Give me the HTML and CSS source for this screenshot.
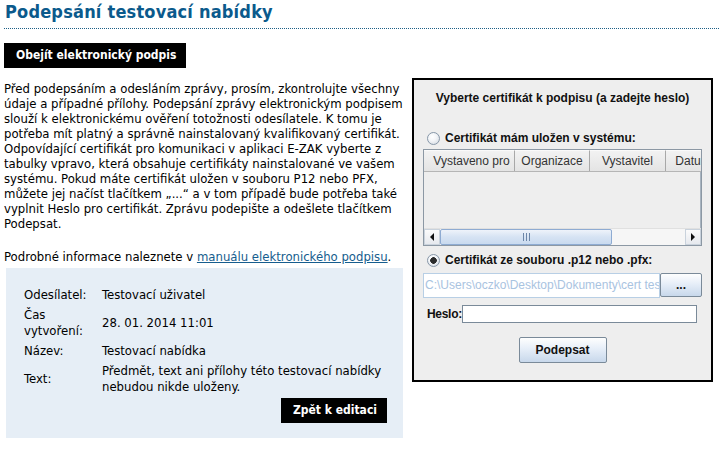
FILE: index.html
```html
<!DOCTYPE html>
<html lang="cs">
<head>
<meta charset="utf-8">
<title>Podepsání testovací nabídky</title>
<link rel="stylesheet" href="styles.css">
</head>
<body>
<h1 class="page-title">Podepsání testovací nabídky</h1>
<div class="actions"><button class="btn-black" type="button">Obejít elektronický podpis</button></div>
<div class="content">
  <div class="left">
    <p class="intro">Před podepsáním a odesláním zprávy, prosím, zkontrolujte všechny údaje a případné přílohy. Podepsání zprávy elektronickým podpisem slouží k elektronickému ověření totožnosti odesílatele. K tomu je potřeba mít platný a správně nainstalovaný kvalifikovaný certifikát. Odpovídající certifikát pro komunikaci v aplikaci E-ZAK vyberte z tabulky vpravo, která obsahuje certifikáty nainstalované ve vašem systému. Pokud máte certifikát uložen v souboru P12 nebo PFX, můžete jej načíst tlačítkem „...“ a v tom případě bude potřeba také vyplnit Heslo pro certifikát. Zprávu podepište a odešlete tlačítkem Podepsat.</p>
    <p class="more">Podrobné informace naleznete v <a href="#">manuálu elektronického podpisu</a>.</p>
    <div class="summary">
      <table class="info">
        <tr><th>Odesílatel:</th><td>Testovací uživatel</td></tr>
        <tr><th>Čas vytvoření:</th><td>28. 01. 2014 11:01</td></tr>
        <tr><th>Název:</th><td>Testovací nabídka</td></tr>
        <tr><th>Text:</th><td>Předmět, text ani přílohy této testovací nabídky nebudou nikde uloženy.</td></tr>
      </table>
      <div class="summary-actions"><button class="btn-black" type="button">Zpět k editaci</button></div>
    </div>
  </div>
  <div class="applet">
    <div class="applet-title">Vyberte certifikát k podpisu (a zadejte heslo)</div>
    <div class="choice"><span class="radio"></span>Certifikát mám uložen v systému:</div>
    <div class="cert-table">
      <div class="cert-head">
        <div class="col c1">Vystaveno pro</div>
        <div class="col c2">Organizace</div>
        <div class="col c3">Vystavitel</div>
        <div class="col c4">Datum</div>
      </div>
      <div class="cert-body"></div>
      <div class="hscroll">
        <span class="sb-btn sb-left"></span>
        <span class="sb-thumb"><span class="grip"></span></span>
        <span class="sb-track"></span>
        <span class="sb-btn sb-right"></span>
      </div>
    </div>
    <div class="choice choice-file"><span class="radio on"></span>Certifikát ze souboru .p12 nebo .pfx:</div>
    <div class="file-row">
      <div class="file-field">C:\Users\oczko\Desktop\Dokumenty\cert test.p12</div>
      <button class="jbtn browse" type="button">...</button>
    </div>
    <div class="pass-row">
      <span class="pass-label">Heslo:</span>
      <input class="pass-input" type="password">
    </div>
    <button class="jbtn sign" type="button">Podepsat</button>
  </div>
</div>
</body>
</html>
```

FILE: styles.css
```css
html, body {
  background: #ffffff;
}
body {
  margin: 0;
  padding: 0 4px;
  font-family: "DejaVu Sans Condensed", "DejaVu Sans", sans-serif;
  font-size: 13px;
  color: #000;
}

.page-title {
  margin: 0;
  padding: 1px 0 5px 1px;
  font-size: 18px;
  line-height: 22px;
  letter-spacing: 0.2px;
  font-weight: bold;
  color: #0b5a8c;
  border-bottom: 1px dotted #1d5f86;
}

.actions {
  margin-top: 14px;
}

.btn-black {
  display: inline-block;
  margin: 0;
  border: 0;
  background: #000;
  color: #fff;
  font-family: "DejaVu Sans Condensed", "DejaVu Sans", sans-serif;
  font-weight: bold;
  font-size: 12px;
  line-height: 15px;
  padding: 5px 10px 5px 12px;
  cursor: pointer;
}

.content {
  display: flex;
  align-items: flex-start;
  margin-top: 10px;
}

.left {
  width: 400px;
  flex: none;
}

.intro {
  margin: 3px 0 0;
  line-height: 15px;
}

.more {
  margin: 18px 0 0;
  line-height: 15px;
}
.more a {
  color: #165d8e;
  text-decoration: underline;
}

.summary {
  margin: 4px 1px 0 2px;
  background: #e6eef6;
  padding: 17px 16px 15px;
}

.info {
  border-collapse: collapse;
  width: 100%;
}
.info th,
.info td {
  padding: 2px;
  line-height: 16px;
  text-align: left;
  vertical-align: middle;
  font-weight: normal;
}
.info th {
  width: 74px;
}

.summary-actions {
  margin-top: 1px;
  text-align: right;
}

/* Java applet */
.applet {
  flex: none;
  margin-left: 8px;
  width: 297px;
  height: 300px;
  border: 2px solid #000;
  background: #eeeeee;
  font-family: "Liberation Sans", Arial, sans-serif;
  font-size: 12px;
  color: #111;
  display: flex;
  flex-direction: column;
}

.applet-title {
  margin-top: 10px;
  line-height: 16px;
  text-align: center;
  font-weight: bold;
}

.choice {
  display: flex;
  align-items: center;
  gap: 5px;
  margin: 24px 0 0 13px;
  height: 16px;
  font-weight: bold;
}
.choice-file {
  margin-top: 6px;
}

.radio {
  width: 11px;
  height: 11px;
  border-radius: 50%;
  border: 1px solid #8797a8;
  background: radial-gradient(circle at 40% 35%, #ffffff 0, #f3f5f8 40%, #cfd6de 100%);
  flex: none;
}
.radio.on {
  background:
    radial-gradient(circle at 50% 50%, #2b2b2b 0, #2b2b2b 3px, transparent 3.6px),
    radial-gradient(circle at 40% 35%, #ffffff 0, #f3f5f8 40%, #cfd6de 100%);
}

.cert-table {
  margin: 3px 9px 0;
  height: 97px;
  box-sizing: border-box;
  border: 1px solid #8c98a4;
  display: flex;
  flex-direction: column;
  overflow: hidden;
}

.cert-head {
  display: flex;
  height: 21px;
  flex: none;
  overflow: hidden;
  border-bottom: 1px solid #b5b5b5;
}
.col {
  flex: none;
  box-sizing: border-box;
  height: 21px;
  line-height: 20px;
  text-align: center;
  color: #333;
  background: linear-gradient(#f2f2f2, #e4e4e4);
  border-right: 1px solid #a8a8a8;
  border-top: 1px solid #fafafa;
  white-space: nowrap;
}
.c1 { width: 91px; padding-left: 5px; }
.c2 { width: 75px; }
.c3 { width: 76px; }
.c4 { width: 54px; border-right: 0; }

.cert-body {
  flex: 1;
  background: #eeeeee;
  border-right: 1px solid #a8b4c0;
}

.hscroll {
  flex: none;
  height: 17px;
  display: flex;
  background: #f4f4f4;
  border-top: 1px solid #e0e0e0;
  box-sizing: border-box;
}
.sb-btn {
  flex: none;
  width: 16px;
  box-sizing: border-box;
  border: 1px solid #c9d2dc;
  background: linear-gradient(#fbfbfb, #e6e9ee);
  display: flex;
  align-items: center;
  justify-content: center;
}
.sb-left::before {
  content: "";
  border-right: 4px solid #111;
  border-top: 4px solid transparent;
  border-bottom: 4px solid transparent;
}
.sb-right::before {
  content: "";
  border-left: 4px solid #111;
  border-top: 4px solid transparent;
  border-bottom: 4px solid transparent;
}
.sb-thumb {
  flex: none;
  width: 172px;
  box-sizing: border-box;
  border: 1px solid #8eabd2;
  border-radius: 2px;
  background: linear-gradient(#eef3fa, #d6e3f3 50%, #c9daef);
  display: flex;
  align-items: center;
  justify-content: center;
}
.grip {
  width: 7px;
  height: 8px;
  background: repeating-linear-gradient(90deg, #6c86a8 0, #6c86a8 1px, transparent 1px, transparent 3px);
}
.sb-track {
  flex: 1;
  background: #f6f6f6;
}

.file-row {
  display: flex;
  margin: 5px 9px 0;
  height: 25px;
}
.file-field {
  flex: 1;
  min-width: 0;
  box-sizing: border-box;
  border: 1px solid #b8cfe5;
  background: #fff;
  color: #a9c3df;
  line-height: 23px;
  padding-left: 1px;
  white-space: nowrap;
  overflow: hidden;
  font-size: 12px;
}

.jbtn {
  margin: 0;
  font-family: "Liberation Sans", Arial, sans-serif;
  font-size: 12px;
  font-weight: bold;
  color: #111;
  border: 1px solid #7a8a99;
  border-radius: 2px;
  background: linear-gradient(#fefefe, #e6eef8 45%, #c8d8eb);
  padding: 0;
  cursor: pointer;
}
.browse {
  flex: none;
  width: 42px;
  height: 24px;
  line-height: 20px;
}

.pass-row {
  display: flex;
  align-items: center;
  margin: 7px 14px 0 13px;
  height: 18px;
}
.pass-label {
  font-weight: bold;
  letter-spacing: -0.3px;
}
.pass-input {
  flex: 1;
  min-width: 0;
  height: 18px;
  box-sizing: border-box;
  margin: 0;
  border: 1px solid #7a8a99;
  background: #fff;
  padding: 0 2px;
}

.sign {
  align-self: center;
  margin-top: 14px;
  width: 88px;
  height: 26px;
}
```
